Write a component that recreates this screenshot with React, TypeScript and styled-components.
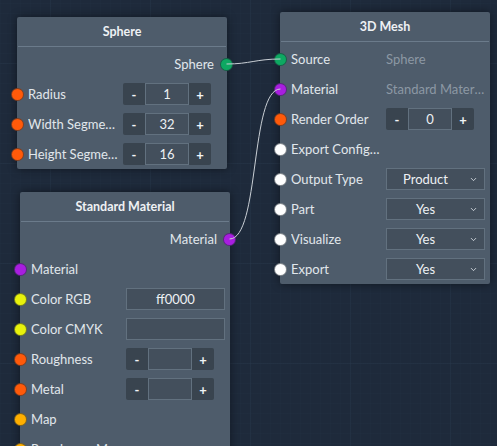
import React from "react";
import styled, { createGlobalStyle } from "styled-components";
import { ChevronDown } from "lucide-react";

const Global = createGlobalStyle`
  html, body { margin: 0; padding: 0; }
  body {
    background: #1e2a3b;
    font-family: "Lato", "Open Sans", sans-serif;
    overflow: hidden;
  }
`;

const Canvas = styled.div`
  position: relative;
  width: 497px;
  height: 446px;
  overflow: hidden;
  background-color: #1e2a3b;
  background-image:
    linear-gradient(rgba(60, 80, 105, 0.12) 1px, transparent 1px),
    linear-gradient(90deg, rgba(60, 80, 105, 0.12) 1px, transparent 1px),
    linear-gradient(rgba(60, 80, 105, 0.05) 1px, transparent 1px),
    linear-gradient(90deg, rgba(60, 80, 105, 0.05) 1px, transparent 1px);
  background-size: 100px 100px, 100px 100px, 10px 10px, 10px 10px;
  background-position: 50px -37px, 50px -37px, 0 3px, 0 3px;
`;

const Edges = styled.svg`
  position: absolute;
  left: 0;
  top: 0;
  pointer-events: none;
  z-index: 2;
`;

const Node = styled.div<{ $x: number; $y: number }>`
  position: absolute;
  left: ${(p) => p.$x}px;
  top: ${(p) => p.$y}px;
  width: 210px;
  background: #4e5c6b;
  border-radius: 2px;
  box-shadow: 0 0 10px rgba(0, 0, 0, 0.45);
  z-index: 1;
`;

const Header = styled.div`
  height: 29px;
  border-bottom: 1px solid #6b7b8b;
  margin: 0 1px;
  display: flex;
  align-items: center;
  justify-content: center;
  font-weight: 700;
  font-size: 12.5px;
  color: #eef1f4;
`;

const Body = styled.div`
  padding-top: 2px;
`;

const Row = styled.div<{ $out?: boolean }>`
  position: relative;
  height: 30px;
  display: flex;
  align-items: center;
  justify-content: ${(p) => (p.$out ? "flex-end" : "flex-start")};
  padding: ${(p) => (p.$out ? "0 13px 0 0" : "0 5px 0 11px")};
  font-size: 13px;
  color: #e1e7ec;
`;

const Label = styled.span`
  width: 90px;
  flex: none;
  white-space: nowrap;
  overflow: hidden;
  text-overflow: ellipsis;
  margin-right: 5px;
`;

const Port = styled.span<{ $color: string; $side: "left" | "right" }>`
  position: absolute;
  top: 50%;
  ${(p) => (p.$side === "left" ? "left: -6px;" : "right: -6px;")}
  width: 11px;
  height: 11px;
  margin-top: -6px;
  border-radius: 50%;
  background: ${(p) => p.$color};
  border: 1px solid rgba(30, 40, 50, 0.55);
  z-index: 3;
`;

const ValueText = styled.span`
  color: #8c98a4;
  white-space: nowrap;
  overflow: hidden;
  text-overflow: ellipsis;
  width: 100px;
`;

const Stepper = styled.div`
  display: flex;
  height: 22px;
  width: 88px;
  border-radius: 2px;
  overflow: hidden;
`;

const StepBtn = styled.div`
  width: 22px;
  display: flex;
  align-items: center;
  justify-content: center;
  background: #39444f;
  color: #f2f4f6;
  font-size: 13px;
  font-weight: 700;
  padding-top: 2px;
  box-sizing: border-box;
`;

const StepValue = styled.div`
  flex: 1;
  display: flex;
  align-items: center;
  justify-content: center;
  background: #434f5c;
  border: 1px solid #62717f;
  color: #eef1f4;
  font-size: 13px;
`;

const TextBox = styled.div`
  width: 99px;
  height: 22px;
  box-sizing: border-box;
  border: 1px solid #62717f;
  background: #434f5c;
  display: flex;
  align-items: center;
  justify-content: center;
  color: #eef1f4;
  font-size: 13px;
`;

const SelectBox = styled(TextBox)`
  position: relative;
  justify-content: flex-start;
  padding: 0 20px 0 0;
`;

const SelectText = styled.span`
  flex: 1;
  text-align: center;
`;

const Chevron = styled.span`
  position: absolute;
  right: 6px;
  top: 6px;
  display: flex;
  color: #e1e7ec;
`;

type Control =
  | { kind: "stepper"; value: string }
  | { kind: "select"; value: string }
  | { kind: "text"; value: string }
  | { kind: "value"; value: string }
  | { kind: "none" };

type RowDef = { label: string; color: string; control: Control };

function Input({ control }: { control: Control }) {
  switch (control.kind) {
    case "stepper":
      return (
        <Stepper>
          <StepBtn>-</StepBtn>
          <StepValue>{control.value}</StepValue>
          <StepBtn>+</StepBtn>
        </Stepper>
      );
    case "select":
      return (
        <SelectBox>
          <SelectText>{control.value}</SelectText>
          <Chevron>
            <ChevronDown size={9} strokeWidth={2.2} />
          </Chevron>
        </SelectBox>
      );
    case "text":
      return <TextBox>{control.value}</TextBox>;
    case "value":
      return <ValueText>{control.value}</ValueText>;
    default:
      return null;
  }
}

function GraphNode({
  x,
  y,
  title,
  output,
  rows,
}: {
  x: number;
  y: number;
  title: string;
  output?: { label: string; color: string };
  rows: RowDef[];
}) {
  return (
    <Node $x={x} $y={y}>
      <Header>{title}</Header>
      <Body>
        {output && (
          <Row $out>
            {output.label}
            <Port $color={output.color} $side="right" />
          </Row>
        )}
        {rows.map((r) => (
          <Row key={r.label}>
            <Port $color={r.color} $side="left" />
            <Label>{r.label}</Label>
            <Input control={r.control} />
          </Row>
        ))}
      </Body>
    </Node>
  );
}

const ORANGE = "#ff5a0a";
const GREEN = "#0ea862";
const PURPLE = "#a81ee0";
const WHITE = "#ffffff";
const YELLOW = "#e8f20c";
const AMBER = "#ffaf00";

export default function App() {
  return (
    <>
      <Global />
      <Canvas>
        <GraphNode
          x={17}
          y={17}
          title="Sphere"
          output={{ label: "Sphere", color: GREEN }}
          rows={[
            { label: "Radius", color: ORANGE, control: { kind: "stepper", value: "1" } },
            { label: "Width Segments", color: ORANGE, control: { kind: "stepper", value: "32" } },
            { label: "Height Segments", color: ORANGE, control: { kind: "stepper", value: "16" } },
          ]}
        />
        <GraphNode
          x={280}
          y={12}
          title="3D Mesh"
          rows={[
            { label: "Source", color: GREEN, control: { kind: "value", value: "Sphere" } },
            { label: "Material", color: PURPLE, control: { kind: "value", value: "Standard Material" } },
            { label: "Render Order", color: ORANGE, control: { kind: "stepper", value: "0" } },
            { label: "Export Configuration", color: WHITE, control: { kind: "none" } },
            { label: "Output Type", color: WHITE, control: { kind: "select", value: "Product" } },
            { label: "Part", color: WHITE, control: { kind: "select", value: "Yes" } },
            { label: "Visualize", color: WHITE, control: { kind: "select", value: "Yes" } },
            { label: "Export", color: WHITE, control: { kind: "select", value: "Yes" } },
          ]}
        />
        <GraphNode
          x={20}
          y={192}
          title="Standard Material"
          output={{ label: "Material", color: PURPLE }}
          rows={[
            { label: "Material", color: PURPLE, control: { kind: "none" } },
            { label: "Color RGB", color: YELLOW, control: { kind: "text", value: "ff0000" } },
            { label: "Color CMYK", color: YELLOW, control: { kind: "text", value: "" } },
            { label: "Roughness", color: ORANGE, control: { kind: "stepper", value: "" } },
            { label: "Metal", color: ORANGE, control: { kind: "stepper", value: "" } },
            { label: "Map", color: AMBER, control: { kind: "none" } },
            { label: "Roughness Map", color: AMBER, control: { kind: "none" } },
          ]}
        />
        <Edges width={497} height={446}>
          <path
            d="M226.5,64 C250,64 256,59 280.5,59"
            fill="none"
            stroke="#c9cfd5"
            strokeWidth={1}
          />
          <path
            d="M229.5,239 C260,239 250,89 280.5,89"
            fill="none"
            stroke="#c9cfd5"
            strokeWidth={1}
          />
        </Edges>
      </Canvas>
    </>
  );
}
